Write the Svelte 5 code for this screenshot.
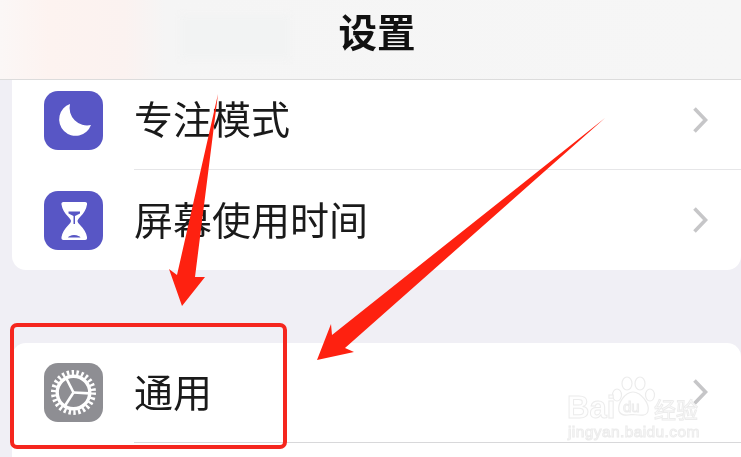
<script>
  const groups = [
    [
      { label: '专注模式', icon: 'moon' },
      { label: '屏幕使用时间', icon: 'hourglass' }
    ],
    [
      { label: '通用', icon: 'gear' },
      { label: '', icon: '' }
    ]
  ];
  const spokes = [3, 123, 243];
</script>

<main class="screen">
  <header class="nav">
    <span class="smear"></span>
    <h1>设置</h1>
  </header>

  {#each groups as rows, g}
    <section class="card" class:second={g === 1}>
      {#each rows as row}
        <div class="row" class:empty={!row.icon}>
          {#if row.icon}
            <span class="icon {row.icon}">
              {#if row.icon === 'moon'}
                <svg viewBox="0 0 59 59" width="59" height="59">
                  <path d="M26 13 A16.400 16.400 0 1 0 47 34 A17.500 17.500 0 0 1 26 13Z" fill="#fff" />
                </svg>
              {:else if row.icon === 'hourglass'}
                <svg viewBox="0 0 59 59" width="59" height="59">
                  <path d="M19.500 11 H41 Q43.500 11 43 13.500 Q42 20 36.500 25.500 Q33.500 28.500 33.500 30 Q33.500 31.500 36.500 34.500 Q42 40 43 46 Q43.500 49 41 49 H19.500 Q17 49 17.500 46 Q18.500 40 24 34.500 Q27 31.500 27 30 Q27 28.500 24 25.500 Q18.500 20 17.500 13.500 Q17 11 19.500 11Z" fill="#fff" />
                  <path d="M24.500 20.500 H36 V22.500 L31 25 V33 H29.500 V25 L24.500 22.500Z M24 46.500 Q25 44.500 30 44 Q35.500 44.500 36.500 46.500Z" fill="#5856c5" />
                </svg>
              {:else}
                <svg viewBox="0 0 59 59" width="59" height="59">
                  <circle cx="29.500" cy="29.500" r="20" fill="none" stroke="#fff" stroke-width="5" stroke-dasharray="2.400 2.430" />
                  <circle cx="29.500" cy="29.500" r="16.300" fill="none" stroke="#fff" stroke-width="3.400" />
                  {#each spokes as a}
                    <line x1="29.500" y1="29.500" x2={29.5 + 16 * Math.cos((a * Math.PI) / 180)} y2={29.5 + 16 * Math.sin((a * Math.PI) / 180)} stroke="#fff" stroke-width="2.600" />
                  {/each}
                </svg>
              {/if}
            </span>
            <div class="body">
              <span class="label">{row.label}</span>
              <svg class="chevron" viewBox="0 0 16 28" width="16" height="28">
                <path d="M2.500 2.500 L13.500 14 L2.500 25.500" fill="none" stroke="#c6c6c8" stroke-width="3.600" />
              </svg>
            </div>
          {/if}
        </div>
      {/each}
    </section>
  {/each}

  <div class="watermark">
    <svg class="paw" viewBox="0 0 46 42" width="46" height="42">
      <g fill="none" stroke="#ececec" stroke-width="1.200">
        <ellipse cx="6" cy="19" rx="4.500" ry="6" />
        <ellipse cx="16" cy="7.500" rx="5" ry="6.500" />
        <ellipse cx="29" cy="7.500" rx="5" ry="6.500" />
        <ellipse cx="39" cy="19" rx="4.500" ry="6" />
        <path d="M22 16 C14 16 6 28 8 35 C10 41 18 39 22 38.500 C27 39 36 41 37 35 C39 28 30 16 22 16Z" />
      </g>
    </svg>
    <span class="wm bai">Bai</span>
    <span class="wm du">du</span>
    <span class="wm jy">经验</span>
    <span class="wm url">jingyan.baidu.com</span>
  </div>

  <div class="mark-box"></div>
  <svg class="arrows" viewBox="0 0 741 457" width="741" height="457">
    <path d="M218 94 L195 277 L205 277 L182 306 L169 269 L177 275Z" fill="#fe2110" />
    <path d="M605 118 L345 348 L354 352 L317 360 L331 324 L332 335Z" fill="#fe2110" />
  </svg>
</main>

<style>
  :global(body) {
    margin: 0;
  }
  .screen {
    position: relative;
    width: 741px;
    height: 457px;
    overflow: hidden;
    background: #f0eff5;
    font-family: "Noto Sans CJK SC", "Liberation Sans", sans-serif;
    color: #111;
    filter: blur(0.4px);
  }
  .nav {
    position: relative;
    z-index: 1;
    height: 79px;
    display: flex;
    align-items: center;
    justify-content: center;
    background: linear-gradient(90deg, #fbf7f6 0, #fdf3f0 50px, #fbf2f0 125px, #f5f5f5 165px, #f6f6f6 100%);
    border-bottom: 1px solid #dcdcdc;
    overflow: hidden;
  }
  .nav h1 {
    position: relative;
    margin: 0 0 20px 13px;
    font-size: 38.500px;
    line-height: 50px;
    font-weight: 700;
    color: #111;
  }
  .smear {
    position: absolute;
    left: 180px;
    top: 15px;
    width: 110px;
    height: 44px;
    background: #f2f3f3;
    filter: blur(3px);
  }
  .card {
    margin: -10px 0 0 12px;
    background: #fff;
    border-radius: 0 0 14px 14px;
  }
  .card.second {
    margin-top: 73px;
    border-radius: 14px 14px 0 0;
  }
  .row {
    height: 100px;
    display: flex;
    align-items: center;
    padding-left: 32px;
    box-sizing: border-box;
  }
  .card.second .row:first-child {
    padding-bottom: 1px;
  }
  .body {
    flex: 1;
    height: 100%;
    margin-left: 31px;
    padding-right: 33px;
    display: flex;
    align-items: center;
    justify-content: space-between;
    box-sizing: border-box;
    border-bottom: 1.500px solid #e6e6e8;
  }
  .row:last-child .body {
    border-bottom: 0;
  }
  .card.second .row:first-child .body {
    height: 100px;
    border-bottom-color: #d8d8da;
  }
  .icon {
    flex: none;
    width: 59px;
    height: 59px;
    border-radius: 14px;
    background: #5856c5;
    display: block;
    overflow: hidden;
  }
  .icon.gear {
    background: #8e8e93;
  }
  .icon svg {
    display: block;
  }
  .label {
    margin-bottom: 5px;
    font-size: 39px;
    line-height: 50px;
    font-weight: 400;
    color: #1a1a1a;
  }
  .watermark {
    position: absolute;
    left: 560px;
    top: 370px;
    width: 170px;
    height: 80px;
    color: #fff;
  }
  .paw {
    position: absolute;
    left: 51px;
    top: 6px;
  }
  .wm {
    position: absolute;
    color: #fefefe;
    -webkit-text-stroke: 1px #ececec;
    line-height: 1;
    font-family: "Liberation Sans", sans-serif;
    white-space: nowrap;
  }
  .bai {
    left: 7px;
    top: 22px;
    font-size: 31px;
    font-weight: 700;
  }
  .du {
    left: 63px;
    top: 29px;
    font-size: 15px;
  }
  .jy {
    left: 94px;
    top: 27px;
    font-size: 22px;
    font-family: "Noto Sans CJK SC", sans-serif;
  }
  .url {
    left: 8px;
    top: 54px;
    font-size: 15.500px;
    letter-spacing: 0.400px;
  }
  .mark-box {
    position: absolute;
    z-index: 2;
    left: 10px;
    top: 323px;
    width: 277px;
    height: 126px;
    box-sizing: border-box;
    border: 4.500px solid #f5261e;
    border-radius: 7px;
  }
  .arrows {
    position: absolute;
    z-index: 2;
    left: 0;
    top: 0;
    pointer-events: none;
  }
</style>
